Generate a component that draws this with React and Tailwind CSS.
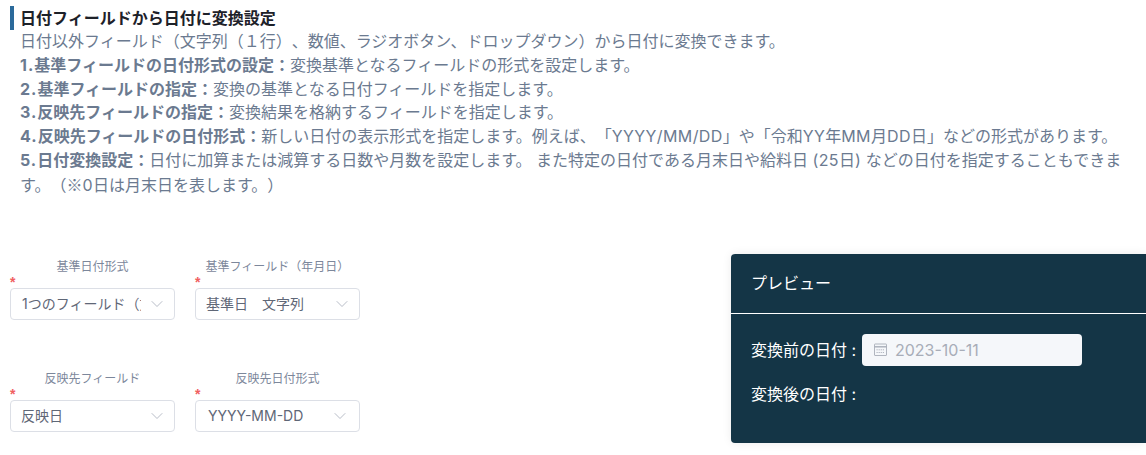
import { ChevronDown } from "lucide-react"

const font = "font-['Inter','Noto_Sans_CJK_JP',sans-serif] [text-spacing-trim:space-all]"

function En({ children }) {
  return <span className="tracking-[0.4px]">{children}</span>
}

const lines = [
  { no: "1.", bold: "基準フィールドの日付形式の設定：", text: "変換基準となるフィールドの形式を設定します。" },
  { no: "2.", bold: "基準フィールドの指定：", text: "変換の基準となる日付フィールドを指定します。" },
  { no: "3.", bold: "反映先フィールドの指定：", text: "変換結果を格納するフィールドを指定します。" },
  {
    no: "4.",
    bold: "反映先フィールドの日付形式：",
    text: (
      <>
        新しい日付の表示形式を指定します。例えば、「<En>YYYY/MM/DD</En>」や「令和<En>YY</En>年<En>MM</En>月<En>DD</En>日」などの形式があります。
      </>
    ),
  },
  {
    no: "5.",
    bold: "日付変換設定：",
    text: (
      <>
        日付に加算または減算する日数や月数を設定します。 また特定の日付である月末日や給料日 <En>(25</En>日<En>)</En> などの日付を指定することもできます。（<span className="font-['Noto_Sans_CJK_JP']">※</span>
        <En>0</En>日は月末日を表します。）
      </>
    ),
  },
]

function Field({ label, value, textClass, chevronClass }) {
  return (
    <div className="w-[165px]">
      <div className="h-[14px] text-center text-xs leading-[14px] text-[#7c879b]">{label}</div>
      <div className="h-[7px] font-['Liberation_Sans'] text-sm font-bold leading-[17px] text-[#f0605f]">*</div>
      <div className="mt-[7px] flex h-8 items-center rounded border border-[#dcdfe6] bg-white pl-[10px] pr-[7px]">
        <span className={`min-w-0 flex-1 overflow-hidden whitespace-nowrap text-sm text-[#5f6777] ${textClass}`}>{value}</span>
        <ChevronDown className={`ml-[6px] h-5 w-5 shrink-0 text-[#aab0bc] ${chevronClass}`} strokeWidth={1} />
      </div>
    </div>
  )
}

export default function App() {
  return (
    <div className={`h-[455px] w-[1146px] overflow-hidden bg-white ${font}`}>
      <div className="pt-[6px] pl-[10px]">
        <div className="flex h-6 items-center border-l-4 border-[#2b6a9b] pl-[6px] text-base font-bold text-[#1d2129]">
          日付フィールドから日付に変換設定
        </div>
        <div className="pl-[10px] pr-[14px] text-base leading-[23.8px] text-[#6b7a90]">
          <p>日付以外フィールド（文字列（１行）、数値、ラジオボタン、ドロップダウン）から日付に変換できます。</p>
          {lines.map((line) => (
            <p key={line.no}>
              <b>
                <span className="tracking-[1px]">{line.no}</span>
                {line.bold}
              </b>
              {line.text}
            </p>
          ))}
        </div>
      </div>

      <div className="mt-[56px] flex items-start justify-between pl-[10px]">
        <div className="mt-[6px] grid grid-cols-[165px_165px] gap-x-5 gap-y-[52px]">
          <Field label="基準日付形式" value="1つのフィールド（文字列）" textClass="pl-[1px]" chevronClass="" />
          <Field label="基準フィールド（年月日）" value="基準日　文字列" textClass="" chevronClass="" />
          <Field label="反映先フィールド" value="反映日" textClass="" chevronClass="" />
          <Field label="反映先日付形式" value="YYYY-MM-DD" textClass="pl-[2px]" chevronClass="mr-[2px]" />
        </div>

        <div className="h-[189px] w-[415px] rounded-l-sm bg-[#143546] text-white shadow-[0_0_10px_rgba(0,0,0,0.08)]">
          <div className="flex h-[60px] items-center border-b border-white pl-5 text-base">プレビュー</div>
          <div className="pl-5 pt-5 text-base">
            <div className="flex h-8 items-center">
              <span className="w-[111px]">変換前の日付 :</span>
              <div className="flex h-8 w-[220px] items-center rounded bg-[#f5f7fa] pl-3 text-[#a8adb8]">
                <svg className="mr-[8px] h-[13px] w-[13px]" viewBox="0 0 13 13" fill="none" stroke="currentColor" strokeWidth="0.9">
                  <rect x="0.5" y="1" width="12" height="11.5" rx="0.5" />
                  <path d="M0.5 3.8h12" strokeWidth="1.4" />
                  <path d="M2.5 6.8h8M2.5 9.5h8" strokeDasharray="1.2 0.9" />
                </svg>
                2023-10-11
              </div>
            </div>
            <div className="mt-3 h-8 leading-8">変換後の日付 :</div>
          </div>
        </div>
      </div>
    </div>
  )
}
